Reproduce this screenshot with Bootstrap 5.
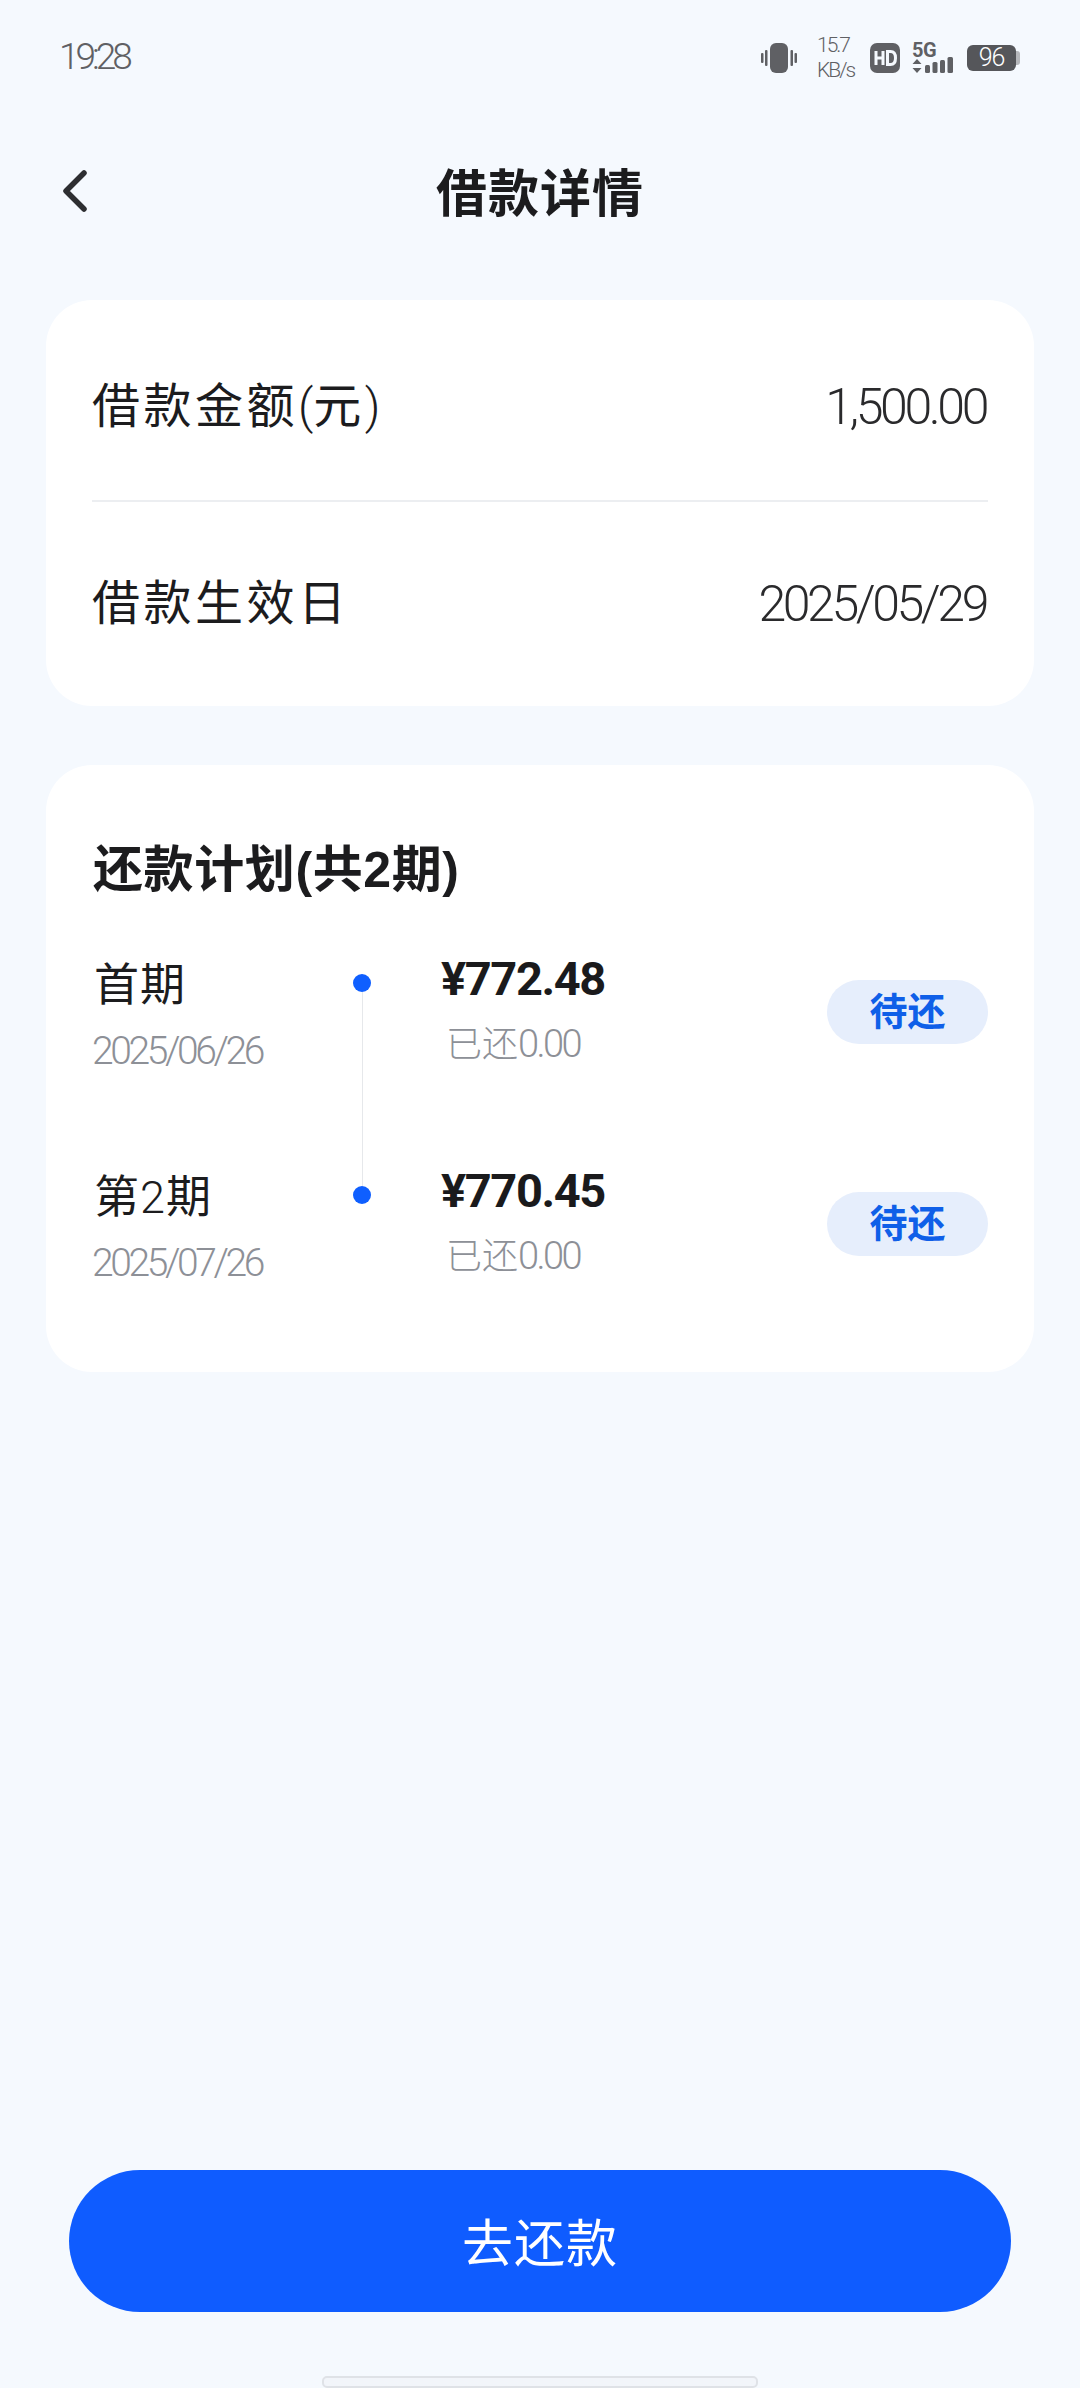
<!DOCTYPE html>
<html lang="zh-CN">
<head>
  <meta charset="UTF-8" />
  <meta name="viewport" content="width=device-width, initial-scale=1.0" />
  <title>借款详情</title>
  <link href="https://cdn.jsdelivr.net/npm/bootstrap@5.3.0/dist/css/bootstrap.min.css" rel="stylesheet" />
  <style>
    html, body { height: 100%; }
    body {
      background: #f5f9fe;
      font-family: "Liberation Sans", "Noto Sans CJK SC", sans-serif;
      color: #1c1c1e;
    }
    .page { width: 1080px; height: 2388px; overflow: hidden; }

    /* Status bar */
    .status-row { height: 112px; padding: 0 60px; color: #5f6064; }
    .clock { font: 300 37px "Roboto", sans-serif; letter-spacing: -4px; margin-left: -1px; }
    .speed { font: 300 21px/25px "Roboto", sans-serif; letter-spacing: -2px; text-align: center; margin: 0 22px 0 20px; width: 31px; white-space: nowrap; }
    .icon-5g { margin-left: 12px; }
    .batt {
      width: 49px; height: 26px; border-radius: 6px; background: #55565a; color: #fff;
      font: 300 25px/26px "Roboto", sans-serif; letter-spacing: -1px; text-align: center; margin-left: 10px;
    }
    .batt-tip { width: 4px; height: 14px; background: #b5b7bb; border-radius: 0 3px 3px 0; }

    /* Title */
    .title-row { height: 76px; margin-top: 45px; padding: 0 62px; position: relative; }
    .page-title { font-size: 51px; font-weight: 700; line-height: 76px; letter-spacing: 1px; margin: 0; }
    .back-btn { position: absolute; left: 62px; top: 13px; line-height: 0; }

    /* Cards */
    .sheet { background: #fff; border-radius: 46px; margin: 0 46px; }
    .sheet-top { margin-top: 67px; height: 406px; padding: 0 46px; }
    .sheet-plan { margin-top: 59px; height: 607px; padding: 75px 46px 0 48px; }
    .info-row { height: 187px; margin-top: 13px; font-size: 48px; letter-spacing: 3.5px; }
    .info-row + .info-row { border-top: 2px solid #eceef1; margin-top: 0; height: 206px; }
    .info-row .cjk-num { font: 300 48px "Roboto", sans-serif; letter-spacing: 0; }
    .info-val { font: 300 50px/56px "Roboto", sans-serif; letter-spacing: -3.4px; color: #2a2a2c; margin-right: 2px; }
    .plan-title { font-size: 50px; font-weight: 700; line-height: 60px; margin: 0 0 53px -1px; white-space: nowrap; letter-spacing: .6px; }

    /* Repayment rows */
    .plan-row { height: 212px; }
    .period-col { width: 259px; }
    .period-name { font-size: 45px; line-height: 68px; letter-spacing: 1px; margin-top: -1px; }
    .period-name span { font-family: "Roboto", sans-serif; font-weight: 300; }
    .period-date { font: 300 39px/54px "Roboto", sans-serif; color: #8d9097; letter-spacing: -3.4px; margin: 4px 0 0 -2px; }
    .dot-col { width: 18px; margin-right: 72px; padding-top: 21px; }
    .dot { width: 18px; height: 18px; background: #0f5fff; border-radius: 50%; flex-shrink: 0; }
    .dot-line { width: 1px; flex-grow: 1; margin-bottom: -21px; background: #e6e8eb; }
    .amount { font: 700 47px/60px "Roboto", sans-serif; letter-spacing: -1.4px; color: #1a1a1c; margin: -4px 0 0 -2px; }
    .paid { font-size: 36px; line-height: 54px; color: #8d9097; font-weight: 300; margin: 9px 0 0 3px; }
    .paid span { font: 300 38px "Roboto", sans-serif; letter-spacing: -2.6px; }
    .pill {
      width: 161px; height: 64px; border-radius: 32px; background: #e6eefc; color: #0f5fe8;
      font-size: 38px; font-weight: 700; line-height: 64px; text-align: center; margin-top: 27px;
    }

    /* Bottom */
    .pay-btn {
      width: 942px; height: 142px; border-radius: 71px; background: #0f5cff; border: 0; color: #fff;
      font-size: 51px; letter-spacing: 1px; margin: 0 auto; padding-top: 14px;
    }
    .pay-btn:hover { background: #0f5cff; color: #fff; }
    .home-bar { width: 436px; height: 12px; margin: 64px auto 0; background: #f2f5fa; border: 2px solid #dfe2e7; border-radius: 5px; }
  </style>
</head>
<body>
  <div class="page d-flex flex-column">
    <!-- Status bar -->
    <div class="status-row d-flex align-items-center justify-content-between">
      <div class="clock">19:28</div>
      <div class="d-flex align-items-center mt-1">
        <svg width="36" height="30" viewBox="0 0 36 30" fill="#5f6064">
          <rect x="9" y="0" width="18" height="30" rx="6"/>
          <rect x="4" y="7" width="2.500" height="16" rx="1"/>
          <rect x="0" y="10" width="2.500" height="10" rx="1"/>
          <rect x="29.500" y="7" width="2.500" height="16" rx="1"/>
          <rect x="33.500" y="10" width="2.500" height="10" rx="1"/>
        </svg>
        <div class="speed">15.7<br>KB/s</div>
        <svg width="30" height="30" viewBox="0 0 30 30">
          <rect width="30" height="30" rx="7" fill="#5f6064"/>
          <path d="M6 8v14M13 8v14M6 15h7" stroke="#f5f9fe" stroke-width="3" fill="none"/>
          <path d="M17.500 8.500h3c3.500 0 5 2.500 5 6.500s-1.500 6.500-5 6.500h-3z" stroke="#f5f9fe" stroke-width="3" fill="none"/>
        </svg>
        <svg class="icon-5g" width="45" height="44" viewBox="0 -4 45 44" fill="#5f6064">
          <text x="0" y="17" font-family="Roboto, sans-serif" font-weight="700" font-size="20" letter-spacing="-.5">5G</text>
          <path d="M5 19l4.500 5H.5zM5 33l-4.500-5h9z"/>
          <rect x="13" y="25" width="5" height="8" rx="1.500"/>
          <rect x="20.500" y="22" width="5" height="11" rx="1.500"/>
          <rect x="28" y="20" width="5" height="13" rx="1.500"/>
          <rect x="35.500" y="17" width="5.500" height="16" rx="1.500"/>
        </svg>
        <div class="batt">96</div>
        <div class="batt-tip"></div>
      </div>
    </div>

    <!-- Title -->
    <div class="title-row text-center">
      <a class="back-btn" href="#">
        <svg width="26" height="42" viewBox="0 0 26 42" fill="none" stroke="#2d2e31" stroke-width="5.500" stroke-linecap="round" stroke-linejoin="round">
          <path d="M22 3 4 21l18 18"/>
        </svg>
      </a>
      <h1 class="page-title">借款详情</h1>
    </div>

    <!-- Loan info -->
    <div class="sheet sheet-top">
      <div class="info-row d-flex align-items-center justify-content-between">
        <span>借款金额<span class="cjk-num">(</span>元<span class="cjk-num">)</span></span><span class="info-val">1,500.00</span>
      </div>
      <div class="info-row d-flex align-items-center justify-content-between">
        <span>借款生效日</span><span class="info-val">2025/05/29</span>
      </div>
    </div>

    <!-- Repayment plan -->
    <div class="sheet sheet-plan">
      <h2 class="plan-title">还款计划(共2期)</h2>
      <div class="plan-row d-flex">
        <div class="period-col">
          <div class="period-name">首期</div>
          <div class="period-date">2025/06/26</div>
        </div>
        <div class="dot-col d-flex flex-column align-items-center">
          <div class="dot"></div>
          <div class="dot-line"></div>
        </div>
        <div class="flex-grow-1">
          <div class="amount">¥772.48</div>
          <div class="paid">已还<span>0.00</span></div>
        </div>
        <div class="pill">待还</div>
      </div>
      <div class="plan-row d-flex">
        <div class="period-col">
          <div class="period-name">第<span>2</span>期</div>
          <div class="period-date">2025/07/26</div>
        </div>
        <div class="dot-col d-flex flex-column align-items-center">
          <div class="dot"></div>
        </div>
        <div class="flex-grow-1">
          <div class="amount">¥770.45</div>
          <div class="paid">已还<span>0.00</span></div>
        </div>
        <div class="pill">待还</div>
      </div>
    </div>

    <!-- Bottom action -->
    <div class="mt-auto d-flex flex-column">
      <button type="button" class="btn pay-btn">去还款</button>
      <div class="home-bar"></div>
    </div>
  </div>
  <script src="https://cdn.jsdelivr.net/npm/bootstrap@5.3.0/dist/js/bootstrap.bundle.min.js"></script>
</body>
</html>
